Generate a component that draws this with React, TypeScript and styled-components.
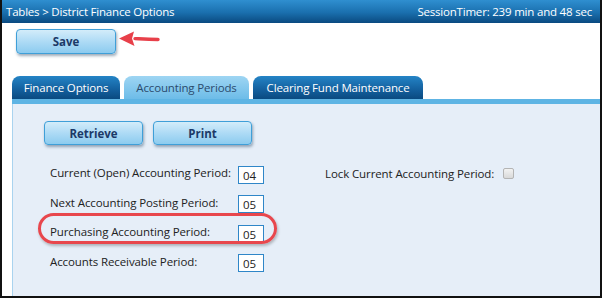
import React from "react";
import styled, { createGlobalStyle } from "styled-components";

const Global = createGlobalStyle`
  html, body { margin: 0; padding: 0; background: #fff; }
  * { box-sizing: border-box; }
`;

const Frame = styled.div`
  width: 602px;
  height: 298px;
  display: flex;
  flex-direction: column;
  border-left: 2px solid #111;
  border-right: 2px solid #111;
  border-bottom: 2px solid #111;
  background: #fff;
  font-family: "Open Sans", "Noto Sans", sans-serif;
  overflow: hidden;
`;

const Header = styled.div`
  height: 23px;
  flex: none;
  display: flex;
  align-items: center;
  justify-content: space-between;
  padding: 0 8px 1px 4px;
  background: linear-gradient(#2f8fd0, #1a6fae 55%, #0a4a80);
  color: #fff;
  font-size: 11.5px;
  letter-spacing: -0.2px;
`;

const Toolbar = styled.div`
  display: flex;
  gap: 2px;
  padding: 6px 0 0 14px;
  height: 53px;
  flex: none;
  align-items: flex-start;
`;

const ActionButton = styled.button<{ $w: number }>`
  width: ${(p) => p.$w}px;
  height: ${(p) => (p.$w > 99 ? 25 : 24)}px;
  border: 1px solid #3f9fd8;
  border-radius: 4px;
  background: linear-gradient(#d3ecfa, #aedbf5 50%, #8ccbef);
  box-shadow: 1px 2px 3px rgba(40, 70, 100, 0.45);
  color: #1c3a68;
  font-family: "Open Sans", "Noto Sans", sans-serif;
  font-weight: 700;
  font-size: 11.5px;
  padding: 0;
  cursor: pointer;
`;

const ArrowWrap = styled.div`
  margin-top: 1px;
  display: flex;
`;

const Tabs = styled.div`
  display: flex;
  gap: 4px;
  padding-left: 10px;
  height: 23px;
  flex: none;
  align-items: flex-end;
`;

const Tab = styled.div<{ $active?: boolean; $w: number }>`
  width: ${(p) => p.$w}px;
  height: 23px;
  border-radius: 8px 8px 0 0;
  display: flex;
  align-items: center;
  justify-content: center;
  font-size: 11.5px;
  letter-spacing: -0.15px;
  color: ${(p) => (p.$active ? "#2b4a6c" : "#fff")};
  background: ${(p) =>
    p.$active
      ? "linear-gradient(#9ed5f3, #6dbce8)"
      : "linear-gradient(#2484c6, #135f9d 60%, #0a4a80)"};
`;

const Strip = styled.div`
  height: 5px;
  flex: none;
  margin-left: 10px;
  background: #5eb4e4;
`;

const Panel = styled.div`
  flex: 1;
  margin-left: 10px;
  border-left: 1px solid #a9d3ef;
  background: #e6eef8;
  padding: 17px 0 0 31px;
  display: flex;
  flex-direction: column;
`;

const ButtonRow = styled.div`
  display: flex;
  gap: 10px;
`;

const Fields = styled.div`
  margin-top: 15px;
  margin-left: 6px;
  display: grid;
  grid-template-columns: 188px 26px 61px auto;
  grid-auto-rows: 29.5px;
  align-items: center;
  font-size: 11.5px;
  color: #222;
  letter-spacing: -0.1px;
`;

const Label = styled.div<{ $col?: number }>`
  grid-column: ${(p) => p.$col ?? 1};
  position: relative;
  white-space: nowrap;
  line-height: 16px;
  margin-top: -3px;
`;

const Field = styled.div`
  grid-column: 2;
  width: 26px;
  height: 18px;
  border: 1px solid #2f86c8;
  background: #fff;
  font-size: 11.5px;
  color: #222;
  padding: 1px 0 0 4px;
  line-height: 15px;
`;

const RightGroup = styled.div`
  grid-column: 4;
  display: flex;
  align-items: center;
  gap: 9px;
  white-space: nowrap;
  margin-top: -2px;
`;

const Check = styled.span`
  width: 11px;
  height: 11px;
  border: 1px solid #b4b4b4;
  border-radius: 2px;
  background: linear-gradient(#f2f2f2, #d9d9d9);
  display: inline-block;
`;

const Ellipse = styled.div`
  position: absolute;
  left: -12px;
  top: -11px;
  width: 239px;
  height: 31px;
  border: 3px solid #e8474d;
  border-radius: 16px;
  box-shadow: 1px 2px 3px rgba(0, 0, 0, 0.25);
  pointer-events: none;
`;

const RowSpacer = styled.div`
  grid-column: 3 / 5;
`;

export default function App() {
  return (
    <>
      <Global />
      <Frame>
        <Header>
          <span>Tables &gt; District Finance Options</span>
          <span>SessionTimer: 239 min and 48 sec</span>
        </Header>
        <Toolbar>
          <ActionButton $w={100}>Save</ActionButton>
          <ArrowWrap>
            <svg width="42" height="18" viewBox="0 0 42 18">
              <path
                d="M40 9.5 C30 9.5 24 9 17 8.6"
                stroke="#e8404a"
                strokeWidth="3.4"
                fill="none"
                strokeLinecap="round"
              />
              <path d="M1 8.5 L16 1.5 L14 8.6 L16.5 16 Z" fill="#e8404a" />
            </svg>
          </ArrowWrap>
        </Toolbar>
        <Tabs>
          <Tab $w={108}>Finance Options</Tab>
          <Tab $w={125} $active>
            Accounting Periods
          </Tab>
          <Tab $w={170}>Clearing Fund Maintenance</Tab>
        </Tabs>
        <Strip />
        <Panel>
          <ButtonRow>
            <ActionButton $w={99}>Retrieve</ActionButton>
            <ActionButton $w={99}>Print</ActionButton>
          </ButtonRow>
          <Fields>
            <Label>Current (Open) Accounting Period:</Label>
            <Field>04</Field>
            <RightGroup>
              Lock Current Accounting Period:
              <Check />
            </RightGroup>
            <Label>Next Accounting Posting Period:</Label>
            <Field>05</Field>
            <RowSpacer />
            <Label>
              <Ellipse />
              Purchasing Accounting Period:
            </Label>
            <Field>05</Field>
            <RowSpacer />
            <Label>Accounts Receivable Period:</Label>
            <Field>05</Field>
            <RowSpacer />
          </Fields>
        </Panel>
      </Frame>
    </>
  );
}
